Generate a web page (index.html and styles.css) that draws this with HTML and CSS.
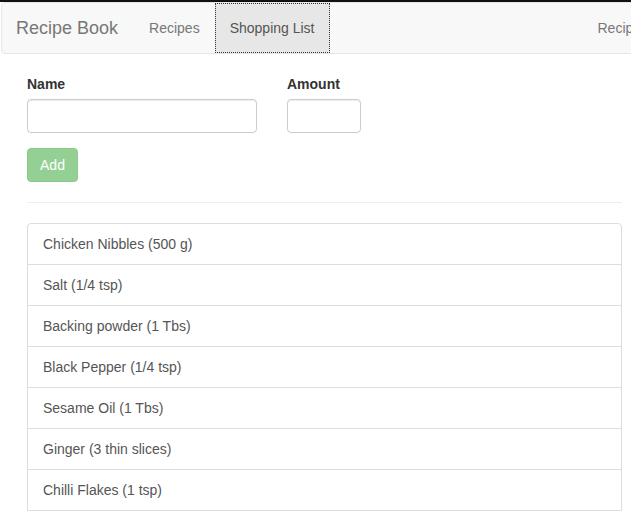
FILE: index.html
```html
<!DOCTYPE html>
<html>
<head>
<meta charset="utf-8">
<link rel="stylesheet" href="styles.css">
</head>
<body>
<div class="topline"></div>
<nav class="navbar">
  <a class="brand">Recipe Book</a>
  <ul class="nav">
    <li><a class="nav-link">Recipes</a></li>
    <li><a class="nav-link active">Shopping List</a></li>
  </ul>
  <div class="nav-right"><a class="nav-link">Recipes</a></div>
</nav>
<main class="content">
  <form class="form">
    <div class="row">
      <div class="field name-field">
        <label class="label">Name</label>
        <input class="input" type="text">
      </div>
      <div class="field amount-field">
        <label class="label">Amount</label>
        <input class="input" type="text">
      </div>
    </div>
    <div class="actions">
      <button class="btn-add" type="button" disabled>Add</button>
    </div>
  </form>
  <hr class="divider">
  <ul class="list-group">
    <li class="list-item">Chicken Nibbles (500 g)</li>
    <li class="list-item">Salt (1/4 tsp)</li>
    <li class="list-item">Backing powder (1 Tbs)</li>
    <li class="list-item">Black Pepper (1/4 tsp)</li>
    <li class="list-item">Sesame Oil (1 Tbs)</li>
    <li class="list-item">Ginger (3 thin slices)</li>
    <li class="list-item">Chilli Flakes (1 tsp)</li>
  </ul>
</main>
</body>
</html>
```
FILE: styles.css
```css
* { box-sizing: border-box; }
html, body {
  margin: 0;
  padding: 0;
  background: #fff;
  overflow: hidden;
  width: 631px;
  height: 511px;
}
body {
  font-family: "Liberation Sans", Arial, sans-serif;
  font-size: 14px;
  line-height: 20px;
  color: #333;
}
.topline {
  height: 2px;
  background: #111;
}
.navbar {
  display: flex;
  align-items: stretch;
  height: 52px;
  width: 700px;
  margin-left: 1px;
  background: #f8f8f8;
  border: 1px solid #e7e7e7;
  border-radius: 4px;
  margin-bottom: 20px;
}
.brand {
  display: block;
  padding: 15px 16px 15px 14px;
  font-size: 18px;
  line-height: 20px;
  color: #777;
}
.nav {
  display: flex;
  list-style: none;
  margin: 0;
  padding: 0;
}
.nav-link {
  display: block;
  padding: 15px 15px;
  line-height: 20px;
  color: #777;
}
.nav-link.active {
  background: #e7e7e7;
  color: #555;
  outline: 1px dotted #333;
  outline-offset: -1px;
}
.nav-right {
  margin-left: 253px;
}
.content {
  padding-left: 27px;
  width: 622px;
}
.row {
  display: flex;
  gap: 30px;
}
.field { display: flex; flex-direction: column; }
.name-field { width: 230px; }
.amount-field { width: 74px; }
.label {
  font-weight: bold;
  margin-bottom: 5px;
  line-height: 20px;
}
.input {
  height: 34px;
  width: 100%;
  border: 1px solid #ccc;
  border-radius: 4px;
  box-shadow: inset 0 1px 1px rgba(0,0,0,.075);
  padding: 6px 12px;
  font-family: inherit;
  font-size: 14px;
}
.actions { margin-top: 15px; }
.btn-add {
  height: 34px;
  width: 51px;
  padding: 6px 12px;
  font-family: inherit;
  font-size: 14px;
  line-height: 20px;
  color: #fff;
  background: #5cb85c;
  border: 1px solid #4cae4c;
  border-radius: 4px;
  opacity: .65;
}
.divider {
  margin: 20px 0;
  border: 0;
  border-top: 1px solid #eee;
}
.list-group {
  list-style: none;
  margin: 0;
  padding: 0;
}
.list-item {
  padding: 10px 15px;
  border: 1px solid #ddd;
  margin-bottom: -1px;
  color: #555;
  line-height: 20px;
}
.list-item:first-child {
  border-top-left-radius: 4px;
  border-top-right-radius: 4px;
}
```
